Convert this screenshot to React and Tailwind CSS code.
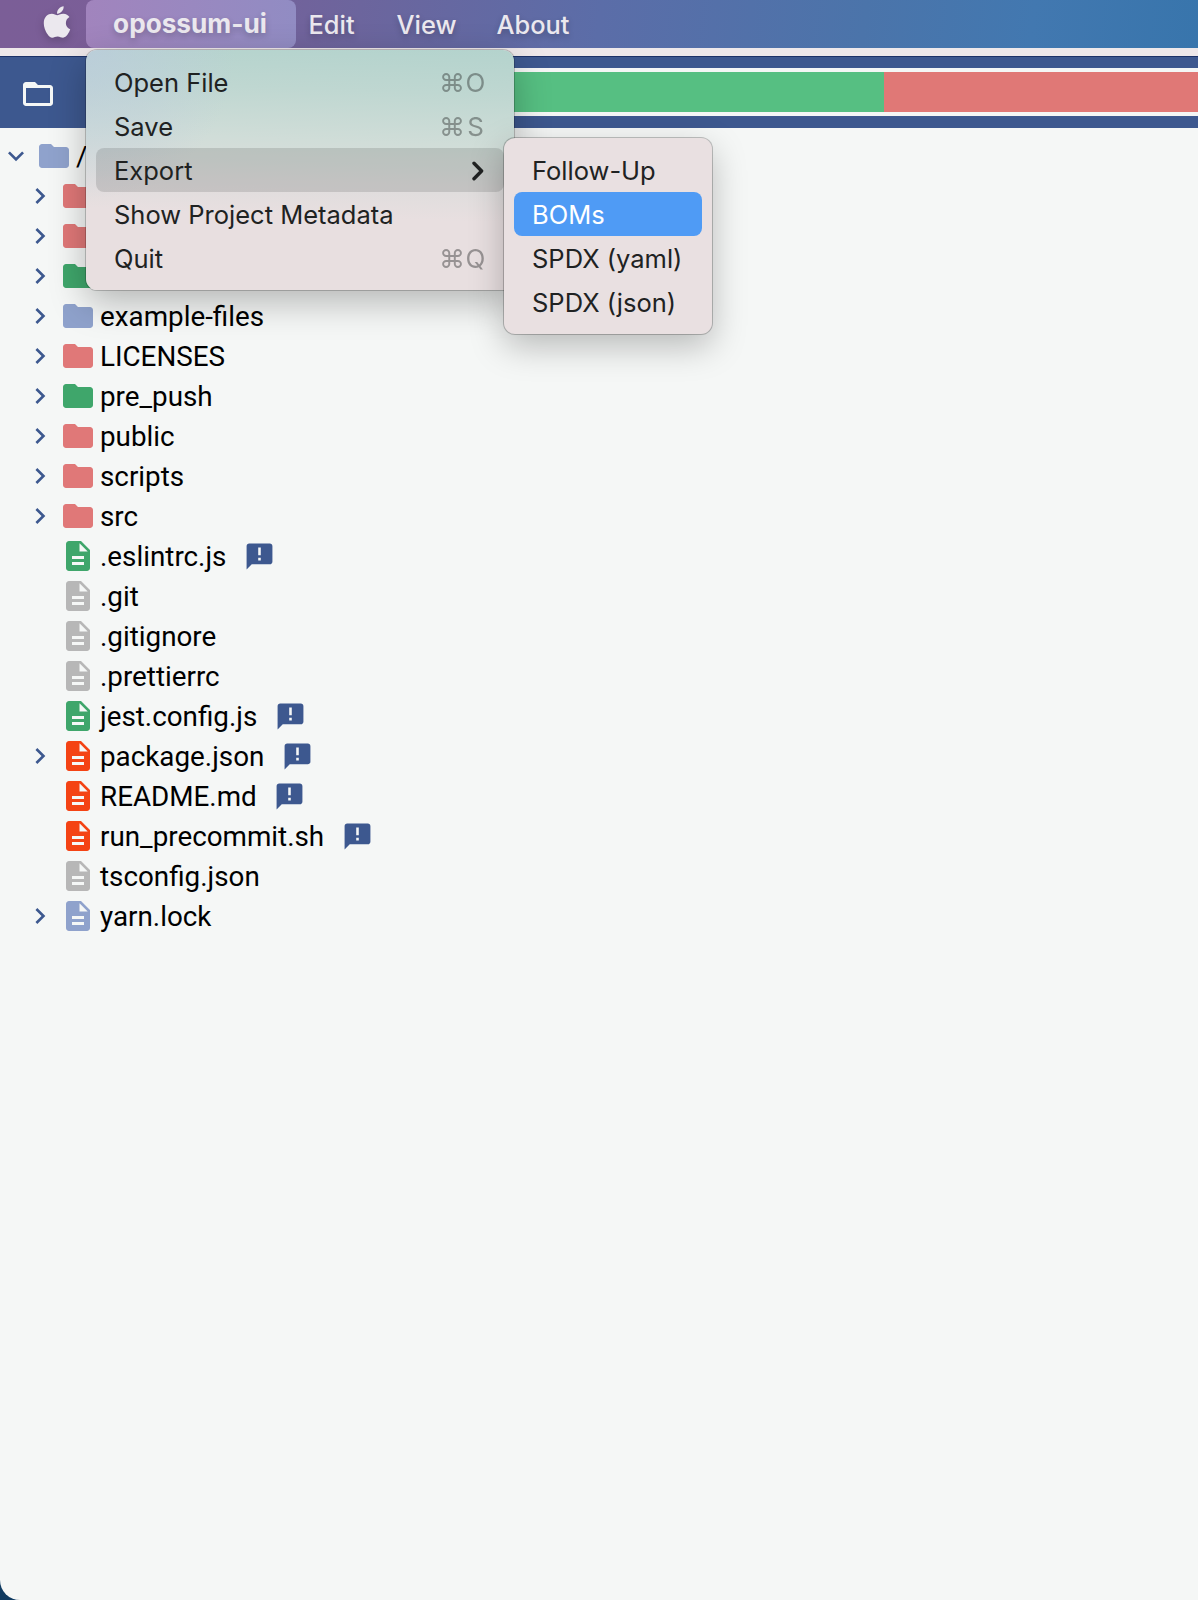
import { FaApple } from "react-icons/fa";

const BLUE = "text-[#8fa2cc]";
const RED = "text-[#e07878]";
const GREEN = "text-[#3fa66b]";
const GRAY = "text-[#b7b7b7]";
const ORANGE = "text-[#f44314]";

const rows = [
  { type: "folder", color: RED, open: true },
  { type: "folder", color: RED, open: true },
  { type: "folder", color: GREEN, open: true },
  { name: "example-files", type: "folder", color: BLUE, open: true },
  { name: "LICENSES", type: "folder", color: RED, open: true },
  { name: "pre_push", type: "folder", color: GREEN, open: true },
  { name: "public", type: "folder", color: RED, open: true },
  { name: "scripts", type: "folder", color: RED, open: true },
  { name: "src", type: "folder", color: RED, open: true },
  { name: ".eslintrc.js", type: "file", color: GREEN, note: true },
  { name: ".git", type: "file", color: GRAY },
  { name: ".gitignore", type: "file", color: GRAY },
  { name: ".prettierrc", type: "file", color: GRAY },
  { name: "jest.config.js", type: "file", color: GREEN, note: true },
  { name: "package.json", type: "file", color: ORANGE, open: true, note: true },
  { name: "README.md", type: "file", color: ORANGE, note: true },
  { name: "run_precommit.sh", type: "file", color: ORANGE, note: true },
  { name: "tsconfig.json", type: "file", color: GRAY },
  { name: "yarn.lock", type: "file", color: BLUE, open: true },
];

function Icon({ d, className }) {
  return (
    <svg viewBox="0 0 24 24" fill="currentColor" className={`shrink-0 ${className}`}>
      <path d={d} />
    </svg>
  );
}

const FOLDER = "M10 4H4c-1.1 0-1.99.9-1.99 2L2 18c0 1.1.9 2 2 2h16c1.1 0 2-.9 2-2V8c0-1.1-.9-2-2-2h-8l-2-2z";
const FOLDER_OPEN = "M20 6h-8l-2-2H4c-1.1 0-1.99.9-1.99 2L2 18c0 1.1.9 2 2 2h16c1.1 0 2-.9 2-2V8c0-1.1-.9-2-2-2zm0 12H4V8h16v10z";
const FILE = "M14 2H6c-1.1 0-1.99.9-1.99 2L4 20c0 1.1.89 2 1.99 2H18c1.1 0 2-.9 2-2V8l-6-6zm2 16H8v-2h8v2zm0-4H8v-2h8v2zm-3-5V3.5L18.5 9H13z";
const RIGHT = "M10 6 8.59 7.41 13.17 12l-4.58 4.59L10 18l6-6z";
const DOWN = "M16.59 8.59 12 13.17 7.41 8.59 6 10l6 6 6-6z";
const NOTE = "M20 2H4c-1.1 0-1.99.9-1.99 2L2 22l4-4h14c1.1 0 2-.9 2-2V4c0-1.1-.9-2-2-2zm-7 9h-2V5h2v6zm0 4h-2v-2h2v2z";

function MenuBar() {
  return (
    <nav className="flex h-12 items-stretch bg-[linear-gradient(97deg,#7b5e97_0%,#7a5e98_14%,#6c659d_30%,#5b6da8_50%,#4b74aa_72%,#4278b0_86%,#3875ac_100%)] font-['Inter',sans-serif] text-[25.4px] font-medium text-[#ebe8ee] [text-shadow:0_3px_6px_rgba(0,0,0,0.22)]">
      <div className="flex w-[86px] items-center justify-end pr-[15px] pb-1">
        <FaApple className="h-[36px] w-[28px] drop-shadow-[0_3px_4px_rgba(0,0,0,0.2)]" />
      </div>
      <div className="flex w-[210px] items-center justify-center rounded-lg bg-linear-to-r from-[#a184bd] to-[#918cc3] pr-0.5 text-[26.2px] font-bold">
        opossum-ui
      </div>
      <div className="flex items-center pt-0.5 pl-[12.5px]">
        <span className="w-[88px]">Edit</span>
        <span className="w-[100px]">View</span>
        <span>About</span>
      </div>
    </nav>
  );
}

function Header() {
  return (
    <header className="flex h-[72px] items-start border-t border-[#1c3268] bg-[#3d588f]">
      <div className="flex w-[100px] items-center pt-[19px] pl-5 text-[#f5f7f6]">
        <Icon d={FOLDER_OPEN} className="size-9" />
      </div>
      <div className="mt-[11px] flex h-12 grow border-y-4 border-[#f4f6f5]">
        <div className="w-[784px] bg-[#56bf82]" />
        <div className="grow bg-[#e07876]" />
      </div>
    </header>
  );
}

function Tree() {
  return (
    <main className="grow pt-2 font-['Roboto',sans-serif] text-[27.8px] text-black">
      <div className="flex h-10 items-center text-[#3d588f]">
        <Icon d={DOWN} className="size-8" />
        <Icon d={FOLDER} className={`ml-1 size-9 ${BLUE}`} />
        <span className="ml-1 pt-0.5 text-black">/</span>
      </div>
      {rows.map((r, i) => (
        <div key={i} className="flex h-10 items-center pl-6 text-[#3d588f]">
          {r.open ? <Icon d={RIGHT} className="size-8" /> : <span className="size-8" />}
          <Icon d={r.type === "folder" ? FOLDER : FILE} className={`ml-1 size-9 ${r.color}`} />
          {r.name && <span className="ml-1 pt-0.5 leading-[38px] text-black">{r.name}</span>}
          {r.note && <Icon d={NOTE} className="ml-[17.5px] size-[31px]" />}
        </div>
      ))}
    </main>
  );
}

function Shortcut({ letter }) {
  return (
    <span className="ml-auto flex text-[26px] opacity-40">
      ⌘<span className="w-[21px] text-center">{letter}</span>
    </span>
  );
}

function FileMenu() {
  return (
    <div className="absolute top-[50px] left-[86px] w-[428px] rounded-[11px] bg-[radial-gradient(ellipse_150px_150px_at_0_0,rgba(188,203,222,0.7),rgba(188,203,222,0)),linear-gradient(182deg,#b4d3cd_0%,#bfd7d1_18%,#d0ddd8_38%,#e0dddd_57%,#e8dfe0_68%,#e8dfe0_100%)] px-2.5 py-[10px] shadow-[0_0_0_1px_rgba(0,0,0,0.2),0_12px_36px_rgba(0,0,0,0.27)] font-['Inter',sans-serif] text-[25.5px] text-[#202222]">
      {[
        ["Open File", "O"],
        ["Save", "S"],
        ["Export", null],
        ["Show Project Metadata", null],
        ["Quit", "Q"],
      ].map(([label, key]) => (
        <div
          key={label}
          className={`flex h-11 items-center rounded-lg px-[18px] pt-0.5 leading-9 ${label === "Export" ? "bg-black/12" : ""}`}
        >
          {label}
          {key && <Shortcut letter={key} />}
          {label === "Export" && (
            <svg viewBox="0 0 12 20" fill="none" stroke="currentColor" strokeWidth="3.4" strokeLinecap="round" strokeLinejoin="round" className="mr-0.5 ml-auto h-5 w-3">
              <path d="M2 2.2 9.6 10 2 17.8" />
            </svg>
          )}
        </div>
      ))}
    </div>
  );
}

function ExportMenu() {
  return (
    <div className="absolute top-[138px] left-[504px] w-[208px] rounded-[11px] bg-[#e9e0e1] px-2.5 py-[10px] shadow-[0_0_0_1px_rgba(0,0,0,0.22),0_12px_34px_rgba(0,0,0,0.25)] font-['Inter',sans-serif] text-[25.5px] text-[#202222]">
      {["Follow-Up", "BOMs", "SPDX (yaml)", "SPDX (json)"].map((label) => (
        <div
          key={label}
          className={`flex h-11 items-center rounded-lg pt-0.5 pl-[18px] leading-9 whitespace-nowrap ${label === "BOMs" ? "bg-[#4f9bf5] text-white" : ""}`}
        >
          {label}
        </div>
      ))}
    </div>
  );
}

export default function App() {
  return (
    <div className="relative h-[1600px] w-[1198px] overflow-hidden bg-[#0f3a60]">
      <div className="flex h-full flex-col">
        <MenuBar />
        <div className="flex grow flex-col overflow-hidden rounded-bl-[20px] bg-[#f5f7f6]">
          <div className="h-2 shrink-0 bg-[#eee8ea]" />
          <Header />
          <Tree />
        </div>
      </div>
      <FileMenu />
      <ExportMenu />
    </div>
  );
}
